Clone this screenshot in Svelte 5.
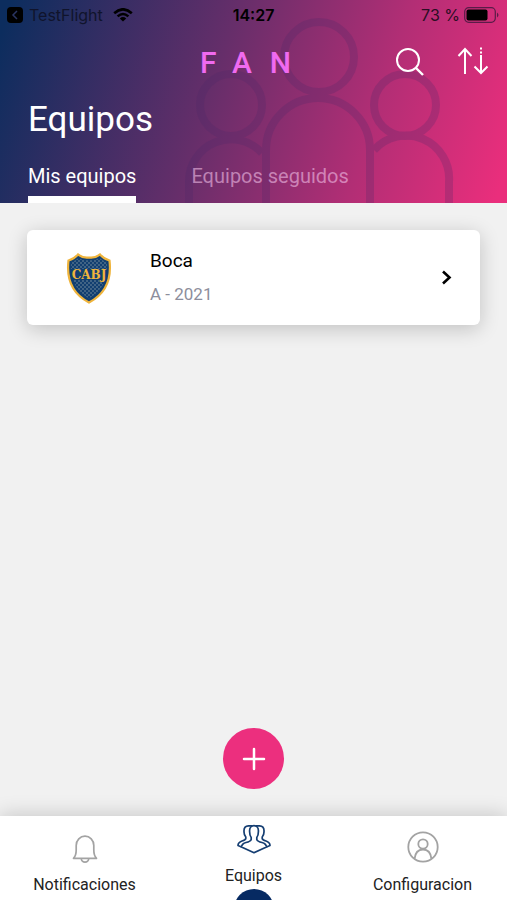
<script lang="ts">
    /* header tabs */
    let tab = $state('mine');

    /* teams of the user */
    const teams = [
        { name: 'Boca', detail: 'A - 2021', short: 'CABJ' }
    ];
</script>

<div class="app">
    <header>
        <svg class="people" viewBox="0 0 507 203" fill="none" stroke="#4a2868" stroke-width="8">
            <circle cx="231" cy="105" r="31" />
            <circle cx="319" cy="57" r="35" />
            <circle cx="405" cy="105" r="31" />
            <path d="M266 208V150a52 52 0 0 1 104 0V208" />
            <path d="M189 208V182a42 42 0 0 1 73 -29M374 150a43 43 0 0 1 75 32V208" />
        </svg>

        <div class="status">
            <div class="left">
                <a href="#testflight">
                    <svg width="16" height="16" viewBox="0 0 16 16">
                        <rect width="16" height="16" rx="4" />
                        <path d="M10 4L6 8l4 4" fill="none" stroke="#2a3563" stroke-width="1.5" />
                    </svg>
                    TestFlight
                </a>
                <svg width="20" height="14" viewBox="0 0 20 14" fill="none" stroke="#000" stroke-width="2.6">
                    <path d="M1.2 5.2Q10 -2.6 18.8 5.2M4.6 8.4Q10 3.6 15.4 8.4" />
                    <path d="M10 13.4L6.8 10.4Q10 7.8 13.2 10.4Z" fill="#000" stroke="none" />
                </svg>
            </div>
            <time>14:27</time>
            <div class="right">
                <span>73 %</span>
                <svg width="36" height="16" viewBox="0 0 36 16">
                    <rect x=".7" y=".7" width="30.6" height="14.6" rx="4" fill="none" stroke="#5a1c48" stroke-width="1.2" />
                    <rect x="2.5" y="2.5" width="21" height="11" rx="2" />
                    <path d="M33 5.5q3 2.5 0 5z" fill="#5a1c48" />
                </svg>
            </div>
        </div>

        <div class="bar">
            <span class="brand">FAN</span>
            <button aria-label="Buscar">
                <svg width="30" height="30" viewBox="0 0 30 30" fill="none" stroke="#fff" stroke-width="2">
                    <circle cx="13" cy="13" r="11" />
                    <path d="M20.5 20.5L28 28" stroke-width="2.4" />
                </svg>
            </button>
            <button aria-label="Ordenar">
                <svg width="32" height="30" viewBox="0 0 32 30" fill="none" stroke="#fff" stroke-width="2">
                    <path d="M8 27V2M1.5 9L8 2l6.5 7" />
                    <path d="M24 .5v2M24 4.5v2M24 8v18M17.5 19.5L24 26l6.5 -6.5" />
                </svg>
            </button>
        </div>

        <h1>Equipos</h1>

        <div class="tabs">
            <button class:active={tab === 'mine'} onclick={() => (tab = 'mine')}>Mis equipos</button>
            <button class:active={tab === 'followed'} onclick={() => (tab = 'followed')}>Equipos seguidos</button>
        </div>
    </header>

    <main>
        {#each teams as team}
            <button class="card">
                <svg width="46" height="52" viewBox="0 0 46 52">
                    <defs>
                        <pattern id="dots" width="4" height="4" patternUnits="userSpaceOnUse">
                            <circle cx="1" cy="1" r=".7" fill="#8fa3a8" />
                            <circle cx="3" cy="3" r=".7" fill="#8fa3a8" />
                        </pattern>
                    </defs>
                    <path d="M12 2.5Q17.5 6.5 23 5.5Q28.5 6.5 34 2.5Q38 7 43.5 8.5Q47 38 23 50.5Q-1 38 2.5 8.5Q8 7 12 2.5Z" fill="#123f70" stroke="#efb43c" stroke-width="2.2" />
                    <path d="M12.500 6Q18 9 23 8Q28 9 33.500 6Q37 9 41 10Q43 35 23 46.5Q3 35 5 10Q9 9 12.5 6Z" fill="url(#dots)" />
                    <rect x="5" y="17" width="36" height="11" fill="#123f70" />
                    <text x="23" y="27" text-anchor="middle">{team.short}</text>
                </svg>
                <span class="info">
                    <span class="name">{team.name}</span>
                    <span class="detail">{team.detail}</span>
                </span>
                <svg width="12" height="16" viewBox="0 0 12 16" fill="none" stroke="#000" stroke-width="2.6">
                    <path d="M2 1.5l6.5 6L2 13.5" />
                </svg>
            </button>
        {/each}

        <button class="add" aria-label="Agregar equipo">
            <svg width="24" height="24" viewBox="0 0 24 24" stroke="#fff" stroke-width="2.5" stroke-linecap="round">
                <path d="M12 2v20M2 12h20" />
            </svg>
        </button>
    </main>

    <nav>
        <a href="#notificaciones">
            <svg width="26" height="28" viewBox="0 0 26 28" fill="none" stroke="#a3a3a3" stroke-width="1.7" stroke-linejoin="round">
                <path d="M1.5 23.3Q4.2 20.5 4.2 15V10.5a8.8 9.3 0 0 1 17.6 0V15Q21.8 20.5 24.5 23.3Z" />
                <path d="M9.3 23.5a3.7 3.6 0 0 0 7.4 0" />
            </svg>
            Notificaciones
        </a>
        <a href="#equipos" class="current">
            <svg width="34" height="30" viewBox="0 0 34 30" fill="none" stroke="#153e72" stroke-width="1.7" stroke-linejoin="round">
                <path d="M14.200 13.500Q12.600 11.500 12.600 7.500V6.500a4.400 4.800 0 0 1 8.800 0V7.500Q21.400 11.500 19.800 13.500V15.500Q20.500 17.500 25 18.500Q29 19.500 29.500 23L17 28.700L4.500 23Q5 19.500 9 18.500Q13.500 17.500 14.200 15.500Z" />
                <path d="M15.500 1.800H11.500Q7 2 7 6.500V8Q7 11 8.800 13V14.500Q8.500 16 5 17Q1 18.500 1 21.500L4.500 23" />
                <path d="M18.500 1.800H22.500Q27 2 27 6.500V8Q27 11 25.200 13V14.500Q25.500 16 29 17Q33 18.500 33 21.500L29.500 23" />
            </svg>
            Equipos
        </a>
        <a href="#configuracion">
            <svg width="32" height="32" viewBox="0 0 32 32" fill="none" stroke="#a3a3a3" stroke-width="1.8">
                <circle cx="16" cy="16" r="14.7" />
                <circle cx="16" cy="13" r="4.7" />
                <path d="M7.5 28Q8.5 18.5 16 18.5T24.5 28" />
            </svg>
            Configuracion
        </a>
    </nav>
</div>

<style>
    :global(body) {
        margin: 0;
        background: #f1f1f1;
        font-family: Roboto, sans-serif;
    }

    button {
        padding: 0;
        border: none;
        background: none;
        font: inherit;
        color: inherit;
        cursor: pointer;
    }

    a {
        color: inherit;
        text-decoration: none;
    }

    svg {
        display: block;
        flex: none;
    }

    .app {
        display: flex;
        flex-direction: column;
        min-height: 100vh;
    }

    header {
        position: relative;
        overflow: hidden;
        background: linear-gradient(108deg, #0c2d5e 2%, #662e6a 42%, #b22e75 72%, #ea2e7c 98%);
        color: white;
    }

    .people {
        position: absolute;
        top: 0;
        left: 0;
        width: 100%;
        opacity: .24;
    }

    .status, .bar, h1, .tabs {
        position: relative;
    }

    .status {
        display: grid;
        grid-template-columns: 1fr auto 1fr;
        align-items: center;
        height: 30px;
        padding: 0 7px;
        font: 16px Inter, sans-serif;
        color: #000;
    }

    .left, .right, .status a {
        display: flex;
        align-items: center;
    }

    .left {
        gap: 10px;
    }

    .right {
        justify-content: flex-end;
        gap: 4px;
        color: #2a0d24;
    }

    .status a {
        gap: 6px;
        color: #10142c;
    }

    time {
        font-weight: 600;
    }

    .bar {
        display: grid;
        grid-template-columns: 1fr auto auto;
        gap: 32px;
        align-items: center;
        height: 64px;
        padding: 0 18px 0 200px;
    }

    .brand {
        font-size: 30px;
        font-weight: 500;
        letter-spacing: 18px;
        color: #f06af0;
    }

    h1 {
        margin: 0 28px;
        font-size: 35px;
        font-weight: 400;
        line-height: 52px;
    }

    .tabs {
        display: flex;
        gap: 55px;
        padding: 8px 28px 0;
        font-size: 20px;
    }

    .tabs button {
        height: 49px;
        padding-top: 1px;
        border-bottom: 7px solid transparent;
        color: rgba(240, 190, 230, .6);
    }

    .tabs .active {
        border-color: white;
        color: white;
    }

    main {
        display: flex;
        flex: 1;
        flex-direction: column;
        padding: 27px;
    }

    .card {
        display: flex;
        align-items: center;
        padding: 14px 27px 14px 39px;
        border-radius: 6px;
        background: white;
        box-shadow: 0 4px 20px rgba(0, 0, 0, .2);
        text-align: left;
    }

    .card text {
        font: bold 12px "DejaVu Serif", serif;
        fill: #efb43c;
    }

    .info {
        display: flex;
        flex: 1;
        flex-direction: column;
        margin-left: 38px;
    }

    .name {
        font-size: 19px;
        line-height: 34px;
        color: #000;
    }

    .detail {
        font-size: 17px;
        line-height: 33px;
        color: #8d8e9c;
    }

    .add {
        display: flex;
        align-items: center;
        justify-content: center;
        align-self: center;
        width: 61px;
        height: 61px;
        margin-top: auto;
        border-radius: 50%;
        background: #ec2f7e;
    }

    nav {
        display: grid;
        grid-template-columns: repeat(3, 1fr);
        height: 84px;
        background: white;
        box-shadow: 0 0 20px rgba(0, 0, 0, .2);
        font-size: 16px;
        line-height: 20px;
        color: #222;
    }

    nav a {
        display: flex;
        flex-direction: column;
        align-items: center;
        justify-content: flex-end;
        gap: 12px;
        padding-bottom: 5px;
    }

    nav .current {
        position: relative;
        overflow: hidden;
        padding-bottom: 14px;
    }

    /* active marker, half below the screen edge */
    .current::after {
        content: '';
        position: absolute;
        top: 73px;
        width: 40px;
        height: 40px;
        border-radius: 50%;
        background: #062a62;
    }
</style>
